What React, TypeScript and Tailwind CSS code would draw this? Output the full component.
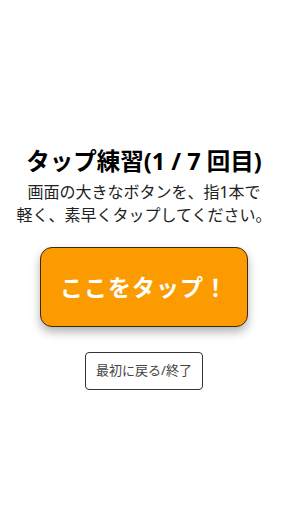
export default function App() {
  return (
    <div
      className="flex h-[512px] w-full flex-col items-center bg-white pt-[145px] text-black"
      style={{ fontFamily: '"Noto Sans", "Noto Sans CJK JP", sans-serif' }}
    >
      <h1 className="text-[23.5px] font-bold leading-[32px]">タップ練習(1 / 7 回目)</h1>
      <p className="mt-[4px] text-center text-[16px] leading-[23px] text-[#222]">
        画面の大きなボタンを、指1本で
        <br />
        軽く、素早くタップしてください。
      </p>
      <button className="mt-[20px] flex h-[80px] w-[208px] items-center justify-center rounded-[12px] border border-[#3a2a10] bg-[#fb9b00] text-[23px] font-bold tracking-[1px] text-white shadow-[0_5px_10px_rgba(0,0,0,0.3)]">
        ここをタップ！
      </button>
      <button className="mt-[25px] flex h-[38px] w-[118px] items-center justify-center rounded-[4px] border border-[#333] bg-white text-[13px] text-[#444]">
        最初に戻る/終了
      </button>
    </div>
  );
}
